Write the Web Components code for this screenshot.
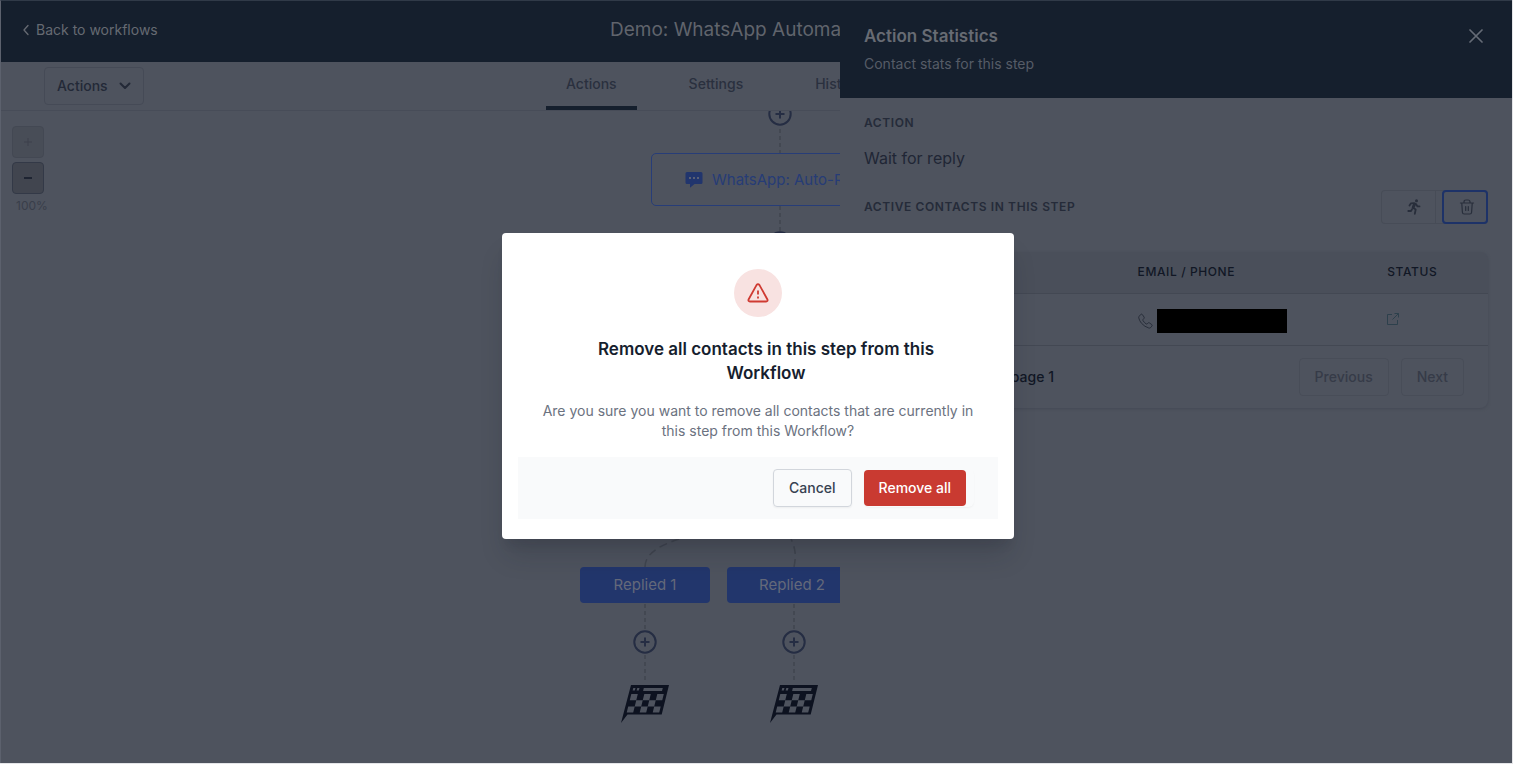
<!DOCTYPE html>
<html lang="en">
<head>
<meta charset="utf-8">
<title>Workflow builder</title>
<style>
:root{
  --navy:#151f2d; --page:#4e535e; --line:#474c58; --ink:#232937; --dark:#111725;
  --onnavy:#666a72; --blue:#22366c; --card:#4a4f5a;
}
html,body{margin:0;height:100%;background:#e4e5e8}
body{font-family:Inter,"Liberation Sans",sans-serif;font-size:14px;line-height:20px;color:var(--ink);box-sizing:border-box;padding:0 1px 1px 0}
</style>
</head>
<body>
<workflow-app>
  <workflow-header slot="header">Demo: WhatsApp Automat</workflow-header>
  <workflow-toolbar slot="toolbar"></workflow-toolbar>
  <workflow-canvas slot="canvas"></workflow-canvas>
  <stats-drawer slot="overlay" heading="Action Statistics" sub="Contact stats for this step">
    <contact-table></contact-table>
  </stats-drawer>
  <confirm-dialog slot="overlay">
    <span slot="title">Remove all contacts in this step from this<br>Workflow</span>
    <span slot="text">Are you sure you want to remove all contacts that are currently in this step from this Workflow?</span>
  </confirm-dialog>
</workflow-app>

<script>
const base = ':host,*{box-sizing:border-box}button{font:inherit;color:inherit;background:none;margin:0;cursor:pointer}svg{display:block;flex:none}h1,h2,p{margin:0}';
function define(name, html, setup) {
  const t = document.createElement('template');
  t.innerHTML = '<style>' + base + '</style>' + html;
  customElements.define(name, class extends HTMLElement {
    constructor() {
      super();
      this.attachShadow({mode: 'open'}).append(t.content.cloneNode(true));
    }
    connectedCallback() { if (setup) setup(this, this.shadowRoot); }
  });
}

define('workflow-app', `
<style>
:host{display:flex;flex-direction:column;position:relative;height:100%;min-height:640px;overflow:hidden;background:var(--page)}
.canvas{flex:1;display:flex;min-height:0}
.edge{position:absolute;inset:0;border-top:1px solid #303a48;border-left:1px solid #5c616d;pointer-events:none}
</style>
<slot name="header"></slot><slot name="toolbar"></slot>
<div class="canvas"><slot name="canvas"></slot></div>
<slot name="overlay"></slot><div class="edge"></div>`);

define('workflow-header', `
<style>
:host{display:grid;grid-template-columns:1fr auto 1fr;align-items:center;height:62px;padding:0 22px 2px;background:var(--navy);color:var(--onnavy)}
a{display:flex;align-items:center;gap:6px;color:inherit;text-decoration:none;justify-self:start}
h1{font-size:19px;line-height:28px;font-weight:400;min-width:292px;color:#60646c}
</style>
<a href="#workflows"><svg width="8" height="12" viewBox="0 0 8 12" fill="none" stroke="currentColor" stroke-width="1.3" stroke-linecap="round" stroke-linejoin="round"><path d="M6 1.500 2 6l4 4.500"/></svg>Back to workflows</a>
<h1><slot></slot></h1>`);

define('workflow-toolbar', `
<style>
:host{display:grid;grid-template-columns:1fr auto 1fr;height:49px;padding:0 44px;border-bottom:1px solid var(--line);font-weight:500}
button{display:flex;align-items:center;gap:11px;height:38px;margin-top:5px;padding:0 12px;border:1px solid #454a56;border-radius:4px;justify-self:start}
nav{display:flex;gap:32px;width:484px;padding-left:32px}
a{color:#2a303e;text-decoration:none;padding:12px 20px;height:48px;border-bottom:4px solid transparent}
a[aria-current]{border-color:var(--navy)}
</style>
<button type="button">Actions<svg width="12" height="8" viewBox="0 0 12 8" fill="none" stroke="currentColor" stroke-width="2" stroke-linecap="round" stroke-linejoin="round"><path d="M1.500 1.500 6 6l4.500-4.500"/></svg></button>
<nav><a href="#actions" aria-current="page">Actions</a><a href="#settings">Settings</a><a href="#history">History</a></nav>`);

define('add-step', `
<style>:host{display:block;width:24px;height:24px}button{display:block;padding:0;border:0}</style>
<button type="button" aria-label="Add step"><svg width="24" height="24" viewBox="0 0 24 24" fill="none" stroke="#252d43" stroke-width="2"><circle cx="12" cy="12" r="10.700"/><path d="M12 7.500v9M7.500 12h9"/></svg></button>`);

define('finish-flag', `
<style>:host{display:block;width:48px;height:38px}</style>
<svg width="48" height="38" viewBox="0 0 48 38"><path fill="#0d1220" d="M10 0h38l-7.300 29.500H6.500L0 38z"/>
<g fill="#4e535e"><path d="m12.300 3-.7 2.600h2.200l.7-2.600zM16.300 3l-.7 2.600h2.200l.7-2.600zM22.800 3l-.7 3H41l.8-3z"/>
<g transform="translate(10.300 9) skewX(-14)"><path d="M0 0h6.500v6.200H0zM13 0h6.500v6.200H13zM26 0h6.500v6.200H26zM6.500 6.200H13v6.200H6.500zM19.500 6.200H26v6.200h-6.500zM0 12.400h6.500v6H0zM13 12.400h6.500v6H13zM26 12.400h6.500v6H26z"/></g></g></svg>`);

define('workflow-canvas', `
<style>
:host{display:block;position:relative;flex:1;overflow:hidden}
.zoom{display:flex;flex-direction:column;align-items:flex-start;gap:4px;padding:15px 12px;font-size:12px;line-height:16px;color:#393e4a}
.zoom button{width:32px;height:32px;padding:0;border:1px solid #333947;border-radius:4px;background:#41454f;display:grid;place-items:center;color:#1e2432}
.zoom button:disabled{color:#3c414d;border-color:#434853;background:#484d57}
.zoom output{padding:0 4px}
.board{position:absolute;left:50%;top:0}
.board>*{position:absolute}
.board svg.links{left:-200px;top:0;width:400px;height:600px}
.node{display:flex;align-items:center;gap:9px;left:-105px;top:42px;width:260px;height:53px;padding-left:33px;border:1px solid #273d78;border-radius:5px;font-size:15px;line-height:24px;color:#263c76;white-space:nowrap}
.reply{display:grid;place-items:center;width:130px;height:36px;top:456px;border-radius:4px;background:var(--blue);color:#64697a;font-size:15px}
</style>
<div class="zoom">
<button type="button" aria-label="Zoom in" disabled><svg width="8" height="8" stroke="currentColor"><path d="M4 0v8M0 4h8"/></svg></button>
<button type="button" aria-label="Zoom out"><svg width="8" height="8" stroke="currentColor" stroke-width="2"><path d="M0 4h8"/></svg></button>
<output>100%</output></div>
<div class="board">
<svg class="links" fill="none" stroke="#40454f" stroke-width="1.500" stroke-dasharray="4 3"><path d="M224 18v24M224 95v26M89 493v26M89 544v28M238 493v26M238 544v28"/><path stroke-dasharray="8 5" d="M89 456c0-14 16-22 34-28M238 456c2-10 2-18-3-28"/></svg>
<add-step style="left:12px;top:-9px"></add-step>
<div class="node"><svg width="18" height="18" viewBox="0 0 18 18"><path fill="#21356d" d="M2 1h14q1.500 0 1.500 1.500v9q0 1.500-1.500 1.500H9.500L5 16.800V13H2Q.5 13 .5 11.500v-9Q.5 1 2 1z"/><path stroke="#5a6075" stroke-width="2" d="M4 7h2M8 7h2M12 7h2"/></svg>WhatsApp: Auto-R</div>
<add-step style="left:12px;top:120px"></add-step>
<div class="reply" style="left:-176px">Replied 1</div>
<div class="reply" style="left:-29px">Replied 2</div>
<add-step style="left:-123px;top:519px"></add-step>
<add-step style="left:26px;top:519px"></add-step>
<finish-flag style="left:-135px;top:574px"></finish-flag>
<finish-flag style="left:14px;top:574px"></finish-flag>
</div>`);

define('stats-drawer', `
<style>
:host{display:flex;flex-direction:column;position:absolute;top:0;right:0;bottom:0;width:672px;max-width:100%;background:var(--page)}
header{display:flex;justify-content:space-between;height:98px;padding:24px;background:var(--navy);color:#676b73}
h2{font-size:17px;line-height:24px;font-weight:600}
header p{margin-top:6px;color:#565c67}
.close{display:grid;place-items:center;width:24px;height:24px;border:0;padding:0;color:#656b76}
section{padding:15px 24px}
h3{margin:0;font-size:12px;line-height:20px;font-weight:600;letter-spacing:.05em;color:#252b39}
.value{margin-top:13px;font-size:16px;line-height:24px;color:#202635}
.row{display:flex;justify-content:space-between;align-items:center;margin:20px 0 28px}
.tools{display:flex;height:34px;border-radius:4px;box-shadow:inset 0 0 0 1px #474c57;color:#282e3b}
.tools button{display:grid;place-items:center;height:34px;border:0;padding:0}
.tools .run{width:55px;padding-left:12px;border-right:1px solid #474c57}
.tools .trash{width:46px;margin-left:6px;padding-left:4px;border:2px solid #1d3268;border-radius:4px}
</style>
<header><div><h2></h2><p></p></div><button class="close" type="button" aria-label="Close"><svg width="14" height="14" viewBox="0 0 14 14" fill="none" stroke="currentColor" stroke-width="1.700" stroke-linecap="round"><path d="m1 1 12 12M13 1 1 13"/></svg></button></header>
<section><h3>ACTION</h3><p class="value">Wait for reply</p>
<div class="row"><h3>ACTIVE CONTACTS IN THIS STEP</h3><div class="tools">
<button class="run" type="button" aria-label="Move contacts on"><svg width="14" height="16" viewBox="0 0 14 16" fill="none" stroke="currentColor" stroke-width="1.800" stroke-linecap="round" stroke-linejoin="round"><circle cx="9.500" cy="1.700" r="1.500" fill="currentColor" stroke="none"/><path d="M2.500 6.500 4 4.300l3-.2 2 1 1.500 2.300h2M7.600 4.800 5.700 8.500l3 2-.9 4.300M5 10.300 4 12H1.300"/><path stroke-width="2.800" d="M7.500 5.500 6.300 8.300"/></svg></button>
<button class="trash" type="button" aria-label="Remove all contacts"><svg width="16" height="16" viewBox="0 0 16 16" fill="none" stroke="currentColor" stroke-width="1.200" stroke-linecap="round" stroke-linejoin="round"><path d="M1.500 4h13M5 3.800V3q0-2 2-2h2q2 0 2 2v.8M2.800 4.500l.6 8.700q.1 1.800 1.800 1.800h5.600q1.700 0 1.800-1.800l.6-8.700M6.700 7.500v4M9.300 7.500v4"/></svg></button>
</div></div><slot></slot></section>`, (el, r) => {
  r.querySelector('h2').textContent = el.getAttribute('heading');
  r.querySelector('header p').textContent = el.getAttribute('sub');
});

define('contact-table', `
<style>
:host{display:block;border-radius:8px;overflow:hidden;box-shadow:0 1px 3px #454a55;color:var(--dark)}
table{width:100%;border-collapse:collapse;table-layout:fixed}
th{background:var(--card);height:41px;padding:0 24px;text-align:left;font-size:12px;line-height:16px;font-weight:500;letter-spacing:.05em}
th:last-child{width:20%}
td{height:52px;padding:0 24px}
tr{border-bottom:1px solid #434853}
.phone{display:flex;align-items:center;gap:4px;padding-top:4px;color:#282e3a;white-space:nowrap}
.mask{width:130px;height:24px;background:#000;flex:none}
td a{display:block;width:12px;color:#2d404c}
footer{display:flex;gap:12px;align-items:center;padding:12px 24px;font-weight:500}
footer p{width:166px;margin-right:auto;text-align:right;white-space:nowrap}
footer button{height:38px;padding:0 15px;border:1px solid #484d58;border-radius:4px;color:#363b48}
</style>
<table><thead><tr><th>NAME</th><th>EMAIL / PHONE</th><th>STATUS</th></tr></thead>
<tbody><tr><td></td><td><div class="phone"><svg width="15" height="16" viewBox="0 0 15 16" fill="none" stroke="currentColor" stroke-linejoin="round"><path d="M1 3.500 2.800 1.400q.9-.7 1.600.2l1.700 2.500q.4.800-.2 1.400l-.9 1q-.4.500 0 1.100 1.200 2 3 3.200.7.500 1.200 0l.9-.9q.6-.5 1.300 0l2.300 1.600q.9.700.2 1.600l-1.500 1.700q-.6.500-1.600.2Q6.600 13.800 3.500 10.300 1.400 7.800.8 5 .5 4.200 1 3.500z"/></svg><span class="mask"></span></div></td>
<td><a href="#contact" aria-label="Open contact"><svg width="12" height="12" viewBox="0 0 12 12" fill="none" stroke="currentColor"><path d="M5 1.500H.5v10h10V7M7.500.5h4v4M11.500.5l-6 6"/></svg></a></td></tr></tbody></table>
<footer><p>Showing page 1</p><button type="button" disabled>Previous</button><button type="button" disabled>Next</button></footer>`);

define('confirm-dialog', `
<style>
:host{display:flex;align-items:center;justify-content:center;position:absolute;inset:0;z-index:1;padding:9px 0 0 4px}
.box{width:512px;max-width:100%;padding:36px 16px 20px;background:#fff;border-radius:4px;box-shadow:0 20px 25px -5px #14182430,0 10px 10px -5px #14182418;text-align:center}
.icon{display:grid;place-items:center;width:48px;height:48px;margin:0 auto 20px;border-radius:50%;background:#f8e2e1}
h2{margin-left:16px;font-size:17px;line-height:24px;font-weight:600;color:#161e2e}
p{margin:16px;color:#6b7280}
footer{display:flex;justify-content:flex-end;gap:12px;padding:12px 24px 12px 32px;background:#f9fafb;font-weight:500}
button{border-radius:4px;padding:0 15px}
.cancel{height:38px;border:1px solid #d2d6dc;color:#374151;box-shadow:0 1px 2px #0000000d}
.confirm{height:36px;border:0;background:#c93a31;color:#fff}
.wrap{padding:1px 8px 1px 0;border-radius:6px;box-shadow:0 1px 2px #0000000a}
</style>
<div class="box" role="dialog" aria-modal="true" aria-labelledby="t">
<div class="icon"><svg width="22" height="20" viewBox="0 0 22 20" fill="none" stroke="#cf3a32" stroke-width="1.800" stroke-linecap="round" stroke-linejoin="round"><path d="M9.500 2.100 1.700 16.200q-1 2.200 1.300 2.300h16q2.300-.1 1.300-2.300L12.500 2.100q-1.500-2-3 0z"/><path stroke-linecap="butt" d="M11 7.500v4M11 13.500v2"/></svg></div>
<h2 id="t"><slot name="title"></slot></h2><p><slot name="text"></slot></p>
<footer><button class="cancel" type="button">Cancel</button><span class="wrap"><button class="confirm" type="button">Remove all</button></span></footer>
</div>`);
</script>
</body>
</html>
